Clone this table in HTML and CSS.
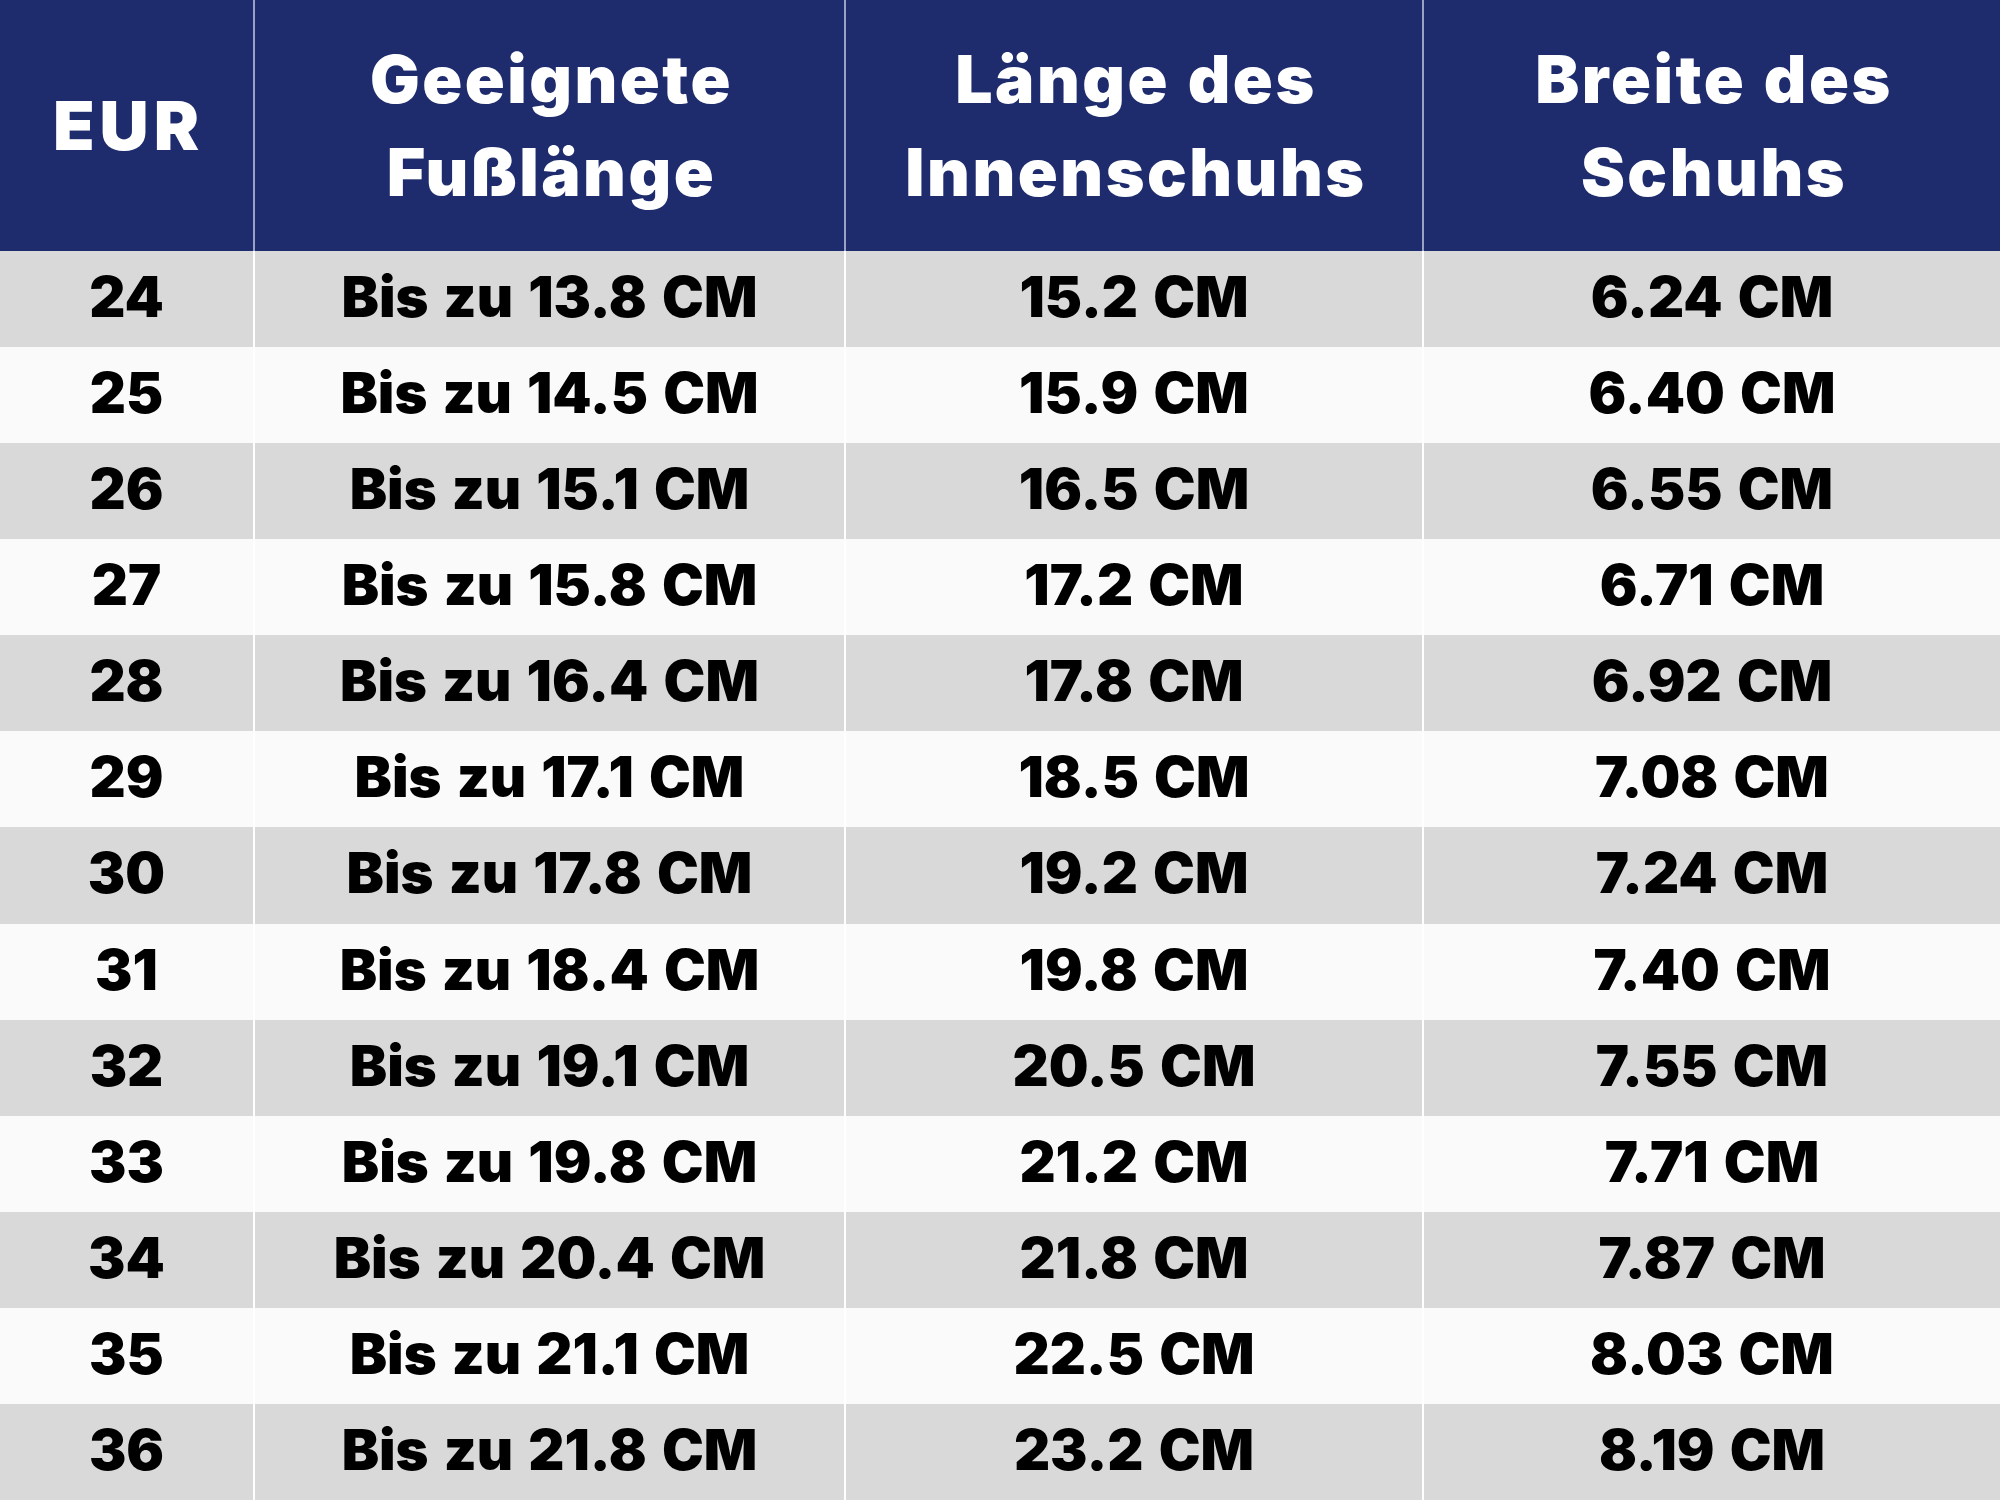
FILE: index.html
```html
<!DOCTYPE html>
<html lang="de">
<head>
<meta charset="utf-8">
<title>Größentabelle</title>
<link rel="stylesheet" href="styles.css">
</head>
<body>
<div class="chart">
  <div class="row head">
    <div class="cell eur">EUR</div>
    <div class="cell">Geeignete<br>Fußlänge</div>
    <div class="cell">Länge des<br>Innenschuhs</div>
    <div class="cell">Breite des<br>Schuhs</div>
  </div>
  <div class="row grey"><div class="cell">24</div><div class="cell">Bis zu 13.8 CM</div><div class="cell">15.2 CM</div><div class="cell">6.24 CM</div></div>
  <div class="row light"><div class="cell">25</div><div class="cell">Bis zu 14.5 CM</div><div class="cell">15.9 CM</div><div class="cell">6.40 CM</div></div>
  <div class="row grey"><div class="cell">26</div><div class="cell">Bis zu 15.1 CM</div><div class="cell">16.5 CM</div><div class="cell">6.55 CM</div></div>
  <div class="row light"><div class="cell">27</div><div class="cell">Bis zu 15.8 CM</div><div class="cell">17.2 CM</div><div class="cell">6.71 CM</div></div>
  <div class="row grey"><div class="cell">28</div><div class="cell">Bis zu 16.4 CM</div><div class="cell">17.8 CM</div><div class="cell">6.92 CM</div></div>
  <div class="row light"><div class="cell">29</div><div class="cell">Bis zu 17.1 CM</div><div class="cell">18.5 CM</div><div class="cell">7.08 CM</div></div>
  <div class="row grey"><div class="cell">30</div><div class="cell">Bis zu 17.8 CM</div><div class="cell">19.2 CM</div><div class="cell">7.24 CM</div></div>
  <div class="row light"><div class="cell">31</div><div class="cell">Bis zu 18.4 CM</div><div class="cell">19.8 CM</div><div class="cell">7.40 CM</div></div>
  <div class="row grey"><div class="cell">32</div><div class="cell">Bis zu 19.1 CM</div><div class="cell">20.5 CM</div><div class="cell">7.55 CM</div></div>
  <div class="row light"><div class="cell">33</div><div class="cell">Bis zu 19.8 CM</div><div class="cell">21.2 CM</div><div class="cell">7.71 CM</div></div>
  <div class="row grey"><div class="cell">34</div><div class="cell">Bis zu 20.4 CM</div><div class="cell">21.8 CM</div><div class="cell">7.87 CM</div></div>
  <div class="row light"><div class="cell">35</div><div class="cell">Bis zu 21.1 CM</div><div class="cell">22.5 CM</div><div class="cell">8.03 CM</div></div>
  <div class="row grey"><div class="cell">36</div><div class="cell">Bis zu 21.8 CM</div><div class="cell">23.2 CM</div><div class="cell">8.19 CM</div></div>
</div>
</body>
</html>
```
FILE: styles.css
```css
html, body {
  margin: 0;
  padding: 0;
  background: #fafafa;
}
.chart {
  width: 2000px;
  height: 1500px;
  display: grid;
  grid-template-rows: 251px repeat(13, 1fr);
  font-family: "Inter", "Liberation Sans", sans-serif;
  font-weight: 900;
}
.row {
  display: grid;
  grid-template-columns: 253px 591px 578px 1fr;
}
.cell {
  display: flex;
  align-items: center;
  justify-content: center;
  text-align: center;
  box-sizing: border-box;
  font-size: 56px;
  color: #000;
  padding-bottom: 4px;
  word-spacing: 4px;
}
.cell + .cell {
  border-left: 2px solid #ffffff;
}
.head {
  background: #1e2c6e;
}
.head .cell {
  color: #ffffff;
  font-size: 66px;
  line-height: 93px;
  padding-bottom: 0;
  padding-left: 4px;
  letter-spacing: 2.5px;
  word-spacing: 2px;
}
.head .eur {
  letter-spacing: 5px;
  font-size: 68px;
}
.head .cell + .cell {
  border-left: 2px solid #9aa2c4;
}
.grey { background: #d9d9d9; }
.light { background: #fafafa; }
```
